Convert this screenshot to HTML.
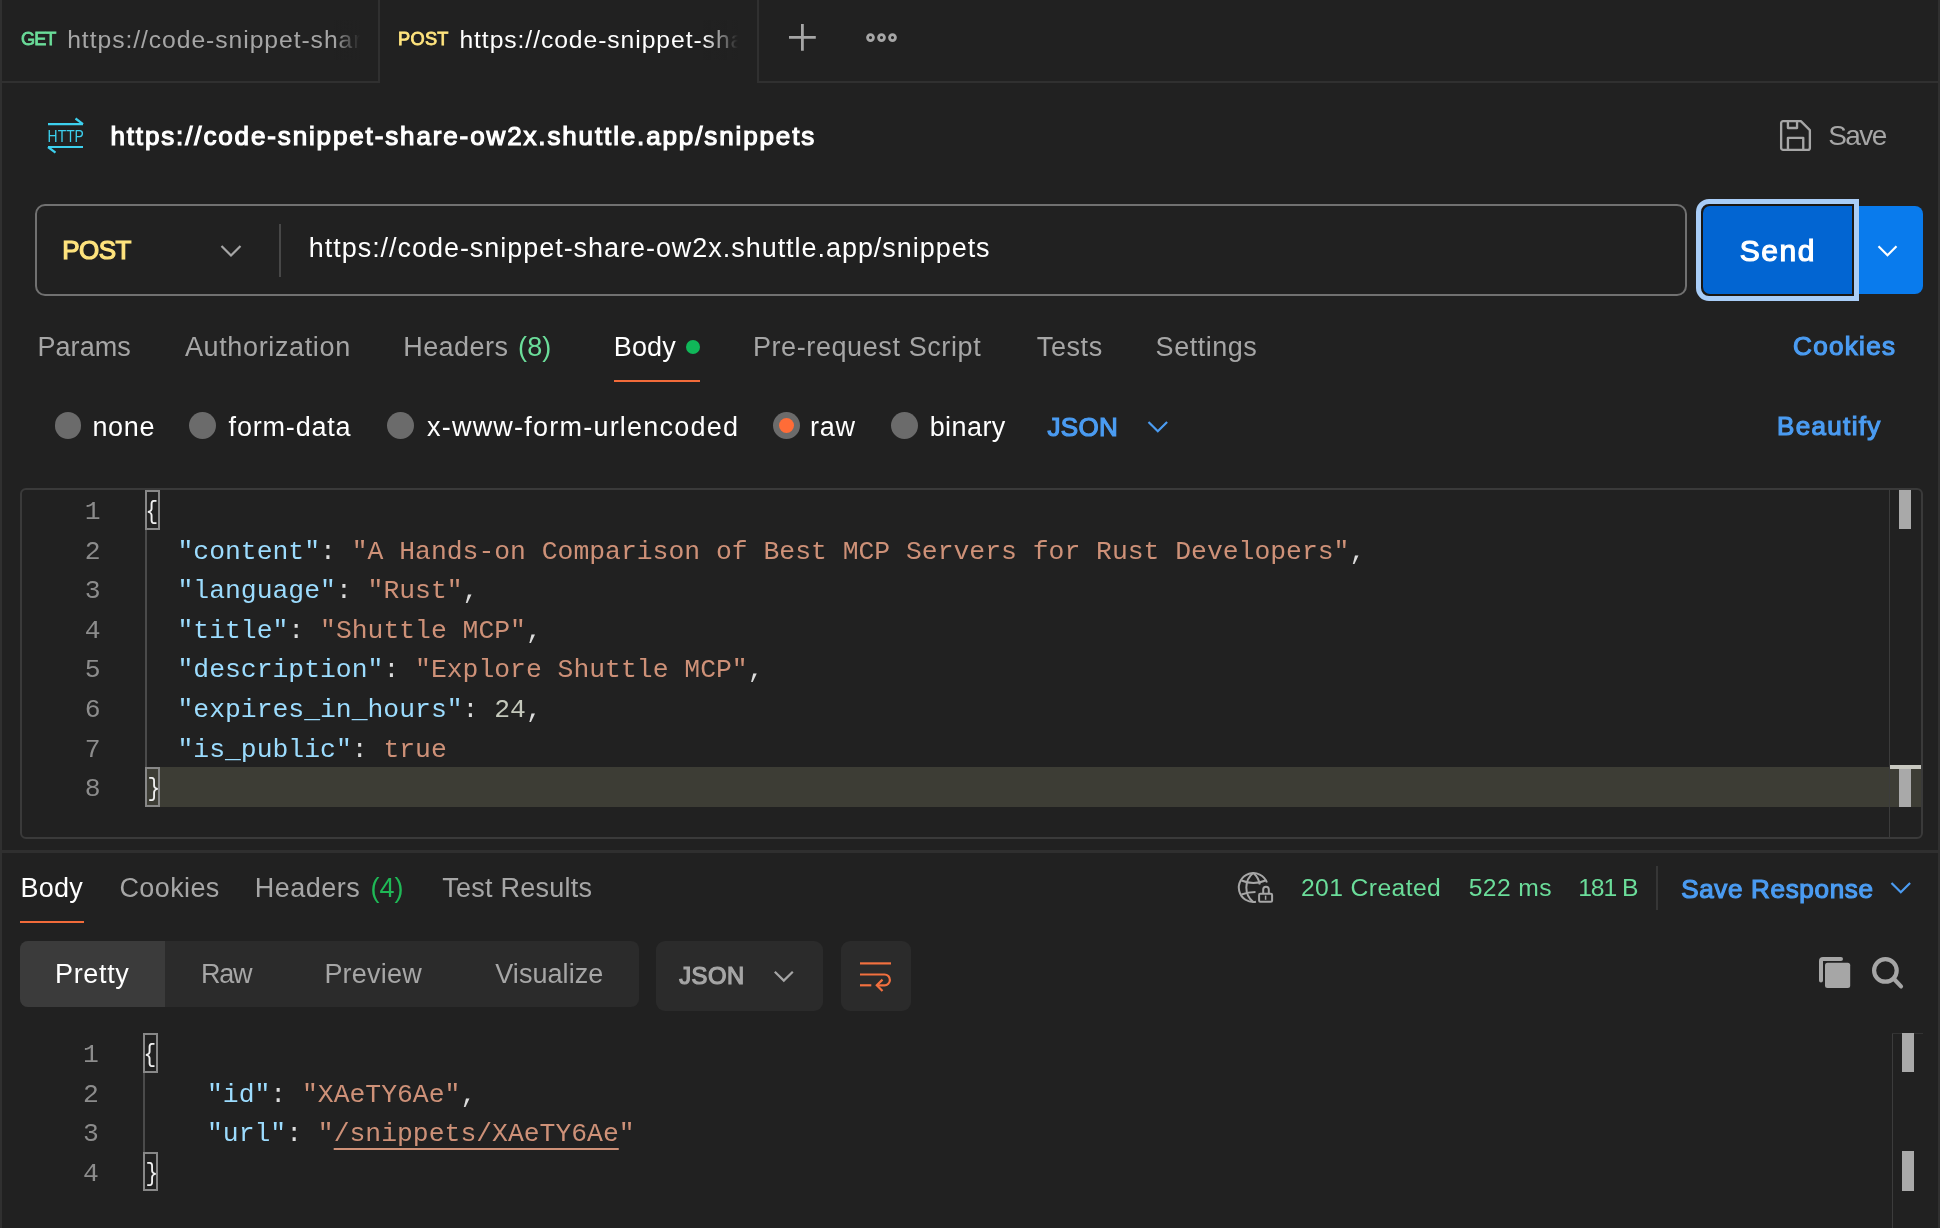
<!DOCTYPE html>
<html lang="en">
<head>
<meta charset="utf-8">
<title>Postman - POST snippets</title>
<style>
html,body{margin:0;padding:0}
body{width:1940px;height:1228px;overflow:hidden;background:#212121;position:relative;font-family:"Liberation Sans",sans-serif;color:#fff}
.a{position:absolute}
.t{position:absolute;line-height:1;white-space:pre;font-family:"Liberation Sans",sans-serif}
.ln{background:#303030}
svg{position:absolute;overflow:visible}
.code{position:absolute;font-family:"Liberation Mono",monospace;font-size:26.4px;line-height:39.6px;white-space:pre;color:#dcdcdc}
.code div{height:39.6px}
.br{color:#f0f0f0;display:inline-block;position:relative;left:-1.5px;transform:scaleX(.8);transform-origin:45% 50%}.k{color:#9cdcfe}.s{color:#ce9178}.n{color:#c4c8bb}.p{color:#9cdcfe}
.num{position:absolute;font-family:"Liberation Mono",monospace;font-size:26.4px;line-height:39.6px;color:#8c8c8c;text-align:right;width:60px}
.num div{height:39.6px}
.radio{position:absolute;width:26.8px;height:26.8px;border-radius:50%;background:#6b6b6b}
.bx{position:absolute;border:2px solid #888;box-sizing:border-box}
.mk{position:absolute;background:#a9a9a9}
</style>
</head>
<body>
<div id="app" style="position:absolute;left:0;top:0;width:1940px;height:1228px;will-change:transform">
<!-- frame strips -->
<div class="a ln" style="left:0;top:0;width:2px;height:1228px"></div>
<div class="a ln" style="left:1938px;top:0;width:2px;height:1228px"></div>
<!-- tab bar -->
<div class="a ln" style="left:0;top:81px;width:380px;height:2px"></div>
<div class="a ln" style="left:757px;top:81px;width:1183px;height:2px"></div>
<div class="a ln" style="left:378px;top:0;width:2px;height:83px"></div>
<div class="a ln" style="left:757px;top:0;width:2px;height:83px"></div>
<!-- plus and more icons -->
<svg style="left:789.2px;top:24.2px" width="27" height="27" viewBox="0 0 27 27"><path d="M13.4 0V26.8M0 13.4H26.8" stroke="#a6a6a6" stroke-width="2.8" fill="none"/></svg>
<svg style="left:864px;top:31px" width="36" height="14" viewBox="864 31 36 14"><g fill="none" stroke="#a6a6a6" stroke-width="2.8"><circle cx="870.5" cy="37.6" r="2.95"/><circle cx="881.5" cy="37.6" r="2.95"/><circle cx="892.5" cy="37.6" r="2.95"/></g></svg>
<!-- HTTP icon -->
<svg style="left:46px;top:116px" width="40" height="40" viewBox="0 0 40 40">
 <g fill="none" stroke="#3dd0ee" stroke-width="2.2">
  <path d="M2 8.2H37M29.5 2.5L37 8.2"/>
  <path d="M37 31H2M9.5 36.7L2 31"/>
 </g>
 <text x="1.6" y="26" font-family="Liberation Sans, sans-serif" font-size="17" fill="#3dd0ee" textLength="36.3" lengthAdjust="spacingAndGlyphs" transform="">HTTP</text>
</svg>
<!-- save icon -->
<svg style="left:1779px;top:119px" width="33" height="33" viewBox="0 0 34 34"><g fill="none" stroke="#a6a6a6" stroke-width="2.4" stroke-linejoin="round"><path d="M2.2 4.2a2 2 0 0 1 2-2H22.5L31.8 11.5V29.8a2 2 0 0 1-2 2H4.2a2 2 0 0 1-2-2Z"/><path d="M9.2 2.4V9.3H18.6V2.4"/><path d="M9.2 31.6V19.4H25V31.6"/></g></svg>
<!-- URL box -->
<div class="a" style="left:35px;top:204px;width:1652px;height:92px;box-sizing:border-box;border:2px solid #717171;border-radius:10px"></div>
<div class="a" style="left:279px;top:224px;width:2px;height:53px;background:#474747"></div>
<svg style="left:220px;top:244px" width="22" height="14" viewBox="0 0 22 14"><path d="M1.5 2L11 11.5L20.5 2" fill="none" stroke="#a6a6a6" stroke-width="2.2"/></svg>
<!-- Send button -->
<div class="a" style="left:1695.8px;top:199px;width:163.4px;height:102px;box-sizing:border-box;border:5.2px solid #a9cdf7;border-radius:13px 0 0 13px;background:#1b1712"></div>
<div class="a" style="left:1703px;top:206.2px;width:149px;height:88px;background:#0265d2;border-radius:7px 0 0 7px"></div>
<div class="a" style="left:1859px;top:206px;width:64px;height:88px;background:#097bed;border-radius:0 8px 8px 0"></div>
<svg style="left:1877px;top:244px" width="22" height="14" viewBox="0 0 22 14"><path d="M1.5 2.2L10.5 11.2L19.5 2.2" fill="none" stroke="#fff" stroke-width="2.2"/></svg>
<!-- request tabs -->
<div class="a" style="left:685.9px;top:340px;width:14.2px;height:14.2px;border-radius:50%;background:#10b759"></div>
<div class="a" style="left:614px;top:379.6px;width:86px;height:2.5px;background:#f26b3a"></div>
<!-- radios -->
<div class="radio" style="left:54.6px;top:411.8px"></div>
<div class="radio" style="left:189.2px;top:411.8px"></div>
<div class="radio" style="left:387.1px;top:411.8px"></div>
<div class="radio" style="left:773.2px;top:411.8px"></div>
<div class="a" style="left:779px;top:417.8px;width:15.2px;height:15.2px;border-radius:50%;background:#ff6c37"></div>
<div class="radio" style="left:891.1px;top:411.8px"></div>
<svg style="left:1147px;top:420px" width="22" height="14" viewBox="0 0 22 14"><path d="M1.5 2L10.8 11.3L20.1 2" fill="none" stroke="#4b9cf2" stroke-width="2.2"/></svg>
<!-- request editor -->
<div class="a" style="left:20px;top:488px;width:1903px;height:351px;box-sizing:border-box;border:2px solid #3a3a3a;border-radius:6px"></div>
<div class="a" style="left:146px;top:767px;width:1775px;height:40px;background:#3d3d35"></div>
<div class="a" style="left:1889px;top:490px;width:1px;height:347px;background:#3c3c3c"></div>
<div class="mk" style="left:1899px;top:490px;width:12px;height:39px"></div>
<div class="a" style="left:1890px;top:765px;width:31px;height:4px;background:#c8c8c0"></div>
<div class="mk" style="left:1899px;top:769px;width:12px;height:38px"></div>
<div class="a" style="left:145.2px;top:530px;width:2px;height:237px;background:#4b4b4b"></div>
<div class="bx" style="left:145.4px;top:490.2px;width:14.6px;height:39.6px"></div>
<div class="bx" style="left:145.4px;top:767px;width:14.6px;height:39.8px"></div>
<div class="num" style="left:40.7px;top:493px"><div>1</div><div>2</div><div>3</div><div>4</div><div>5</div><div>6</div><div>7</div><div>8</div></div>
<div class="code" style="left:145.8px;top:493px"><div><span class="br">{</span></div><div>  <span class="p">"</span><span class="k">content</span><span class="p">"</span>: <span class="s">"A Hands-on Comparison of Best MCP Servers for Rust Developers"</span>,</div><div>  <span class="p">"</span><span class="k">language</span><span class="p">"</span>: <span class="s">"Rust"</span>,</div><div>  <span class="p">"</span><span class="k">title</span><span class="p">"</span>: <span class="s">"Shuttle MCP"</span>,</div><div>  <span class="p">"</span><span class="k">description</span><span class="p">"</span>: <span class="s">"Explore Shuttle MCP"</span>,</div><div>  <span class="p">"</span><span class="k">expires_in_hours</span><span class="p">"</span>: <span class="n">24</span>,</div><div>  <span class="p">"</span><span class="k">is_public</span><span class="p">"</span>: <span class="s">true</span></div><div><span class="br" style="left:0.3px">}</span></div></div>
<!-- separator -->
<div class="a" style="left:2px;top:850px;width:1936px;height:3px;background:#2f2f2f"></div>
<!-- response tabs -->
<div class="a" style="left:20px;top:920.7px;width:64px;height:2.3px;background:#f26b3a"></div>
<div class="a" style="left:1656px;top:866px;width:2px;height:44px;background:#363636"></div>
<svg style="left:1890px;top:881px" width="22" height="14" viewBox="0 0 22 14"><path d="M1.5 2L10.8 11.3L20.1 2" fill="none" stroke="#4b9cf2" stroke-width="2.2"/></svg>
<!-- globe + lock -->
<svg style="left:1230px;top:865px" width="50" height="45" viewBox="1230 865 50 45"><g fill="none" stroke="#a6a6a6" stroke-width="2"><path d="M1256 901.8A14.5 14.5 0 1 1 1266.9 882.5"/><path d="M1253.3 873C1244 880 1244 895 1253.3 902"/><path d="M1253.3 873C1257 876 1259 880 1259.8 884.5"/><path d="M1241.5 880.5Q1253.5 885.5 1265.5 880.5"/><path d="M1241.5 894.5Q1248 892 1255.5 892"/><rect x="1259.1" y="893.7" width="13" height="8.1" rx="1.2"/><path d="M1263.2 893V889.5a2.8 2.8 0 0 1 5.6 0V893"/><path d="M1265.6 895.6V899.8" stroke-width="1.5"/></g></svg>
<!-- response toolbar -->
<div class="a" style="left:20px;top:941px;width:619px;height:66px;background:#2b2b2b;border-radius:8px"></div>
<div class="a" style="left:20px;top:941px;width:145px;height:66px;background:#3b3b3b;border-radius:8px 0 0 8px"></div>
<div class="a" style="left:656px;top:941px;width:167px;height:70px;background:#2b2b2b;border-radius:9px"></div>
<svg style="left:773px;top:970px" width="22" height="14" viewBox="0 0 22 14"><path d="M1.8 1.8L10.8 10.6L19.8 1.8" fill="none" stroke="#a6a6a6" stroke-width="2.2"/></svg>
<div class="a" style="left:841px;top:941px;width:70px;height:70px;background:#2b2b2b;border-radius:9px"></div>
<svg style="left:858px;top:958px" width="36" height="36" viewBox="0 0 36 36"><g fill="none" stroke="#f2703f" stroke-width="2.2"><path d="M2 5.4H33"/><path d="M2 16.5H26.5a5.4 5.4 0 0 1 0 10.8H19"/><path d="M2 27.3H13.3"/><path d="M24.5 21.6L18.8 27.3L24.5 33"/></g></svg>
<!-- copy + search -->
<svg style="left:1816px;top:954px" width="38" height="38" viewBox="0 0 38 38"><path d="M5 26.5V7a2 2 0 0 1 2-2H25" fill="none" stroke="#a6a6a6" stroke-width="4" stroke-linecap="round"/><rect x="9" y="8.8" width="25.2" height="25.2" rx="2.5" fill="#a6a6a6"/></svg>
<svg style="left:1870px;top:955px" width="36" height="36" viewBox="0 0 36 36"><g fill="none" stroke="#a6a6a6" stroke-width="4.2" stroke-linecap="round"><circle cx="15.4" cy="15.4" r="11.3"/><path d="M23.8 23.8L31 31.4"/></g></svg>
<!-- response editor -->
<div class="a" style="left:1892px;top:1033px;width:1px;height:195px;background:#3c3c3c"></div>
<div class="a" style="left:1892px;top:1033px;width:31px;height:1px;background:#333"></div>
<div class="mk" style="left:1902px;top:1033px;width:12px;height:39px"></div>
<div class="mk" style="left:1902px;top:1151px;width:12px;height:40px"></div>
<div class="a" style="left:143.2px;top:1073px;width:2px;height:80px;background:#4b4b4b"></div>
<div class="bx" style="left:143.3px;top:1033.4px;width:14.8px;height:39.6px"></div>
<div class="bx" style="left:143.3px;top:1152px;width:14.8px;height:39px"></div>
<div class="num" style="left:38.8px;top:1036px"><div>1</div><div>2</div><div>3</div><div>4</div></div>
<div class="code" style="left:143.6px;top:1036px"><div><span class="br">{</span></div><div>    <span class="p">"</span><span class="k">id</span><span class="p">"</span>: <span class="s">"XAeTY6Ae"</span>,</div><div>    <span class="p">"</span><span class="k">url</span><span class="p">"</span>: <span class="s">"<span style="text-decoration:underline;text-underline-offset:6.5px;text-decoration-thickness:1.7px">/snippets/XAeTY6Ae</span>"</span></div><div><span class="br" style="left:0.3px">}</span></div></div>
<span class="t" id="get" style="left:20.9px;top:30.1px;font-size:18.2px;font-weight:400;letter-spacing:-0.90px;color:#6bdd9a;-webkit-text-stroke:0.8px #6bdd9a">GET</span>
<span class="t" id="tab1" style="left:67.2px;top:27.9px;font-size:24.7px;font-weight:400;letter-spacing:0.94px;color:#a6a6a6">https://code-snippet-shar</span>
<span class="t" id="post" style="left:398.1px;top:30.1px;font-size:18.2px;font-weight:400;letter-spacing:0.27px;color:#ffe47e;-webkit-text-stroke:0.8px #ffe47e">POST</span>
<span class="t" id="tab2" style="left:459.4px;top:27.9px;font-size:24.7px;font-weight:400;letter-spacing:0.93px;color:#ffffff">https://code-snippet-sha</span>
<span class="t" id="title" style="left:110.4px;top:123.0px;font-size:26px;font-weight:400;letter-spacing:1.87px;color:#ffffff;-webkit-text-stroke:1.2px #ffffff">https://code-snippet-share-ow2x.shuttle.app/snippets</span>
<span class="t" id="save" style="left:1828.2px;top:122.3px;font-size:28px;font-weight:400;letter-spacing:-1.60px;color:#a6a6a6">Save</span>
<span class="t" id="post2" style="left:62.2px;top:237.4px;font-size:26px;font-weight:400;letter-spacing:-0.50px;color:#ffe47e;-webkit-text-stroke:1.2px #ffe47e">POST</span>
<span class="t" id="url" style="left:308.8px;top:235.0px;font-size:27px;font-weight:400;letter-spacing:0.96px;color:#ffffff">https://code-snippet-share-ow2x.shuttle.app/snippets</span>
<span class="t" id="send" style="left:1739.7px;top:236.3px;font-size:30px;font-weight:400;letter-spacing:1.60px;color:#ffffff;-webkit-text-stroke:1.2px #ffffff">Send</span>
<span class="t" id="params" style="left:37.5px;top:334.2px;font-size:27px;font-weight:400;letter-spacing:0.04px;color:#a6a6a6">Params</span>
<span class="t" id="auth" style="left:184.9px;top:334.2px;font-size:27px;font-weight:400;letter-spacing:0.64px;color:#a6a6a6">Authorization</span>
<span class="t" id="headers" style="left:403.2px;top:334.2px;font-size:27px;font-weight:400;letter-spacing:0.45px;color:#a6a6a6">Headers</span>
<span class="t" id="h8" style="left:518.1px;top:334.2px;font-size:27px;font-weight:400;letter-spacing:0.05px;color:#6bdd9a">(8)</span>
<span class="t" id="body" style="left:613.8px;top:334.2px;font-size:27px;font-weight:400;letter-spacing:0.13px;color:#ffffff">Body</span>
<span class="t" id="prereq" style="left:752.9px;top:334.2px;font-size:27px;font-weight:400;letter-spacing:0.60px;color:#a6a6a6">Pre-request Script</span>
<span class="t" id="tests" style="left:1036.8px;top:334.2px;font-size:27px;font-weight:400;letter-spacing:0.60px;color:#a6a6a6">Tests</span>
<span class="t" id="settings" style="left:1155.6px;top:334.2px;font-size:27px;font-weight:400;letter-spacing:0.53px;color:#a6a6a6">Settings</span>
<span class="t" id="cookies" style="left:1793.1px;top:333.3px;font-size:26px;font-weight:400;letter-spacing:1.32px;color:#4b9cf2;-webkit-text-stroke:1.2px #4b9cf2">Cookies</span>
<span class="t" id="none" style="left:92.4px;top:414.4px;font-size:27px;font-weight:400;letter-spacing:0.67px;color:#ffffff">none</span>
<span class="t" id="formdata" style="left:228.6px;top:414.4px;font-size:27px;font-weight:400;letter-spacing:0.81px;color:#ffffff">form-data</span>
<span class="t" id="xwww" style="left:427.0px;top:414.4px;font-size:27px;font-weight:400;letter-spacing:1.22px;color:#ffffff">x-www-form-urlencoded</span>
<span class="t" id="raw" style="left:810.1px;top:414.4px;font-size:27px;font-weight:400;letter-spacing:0.65px;color:#ffffff">raw</span>
<span class="t" id="binary" style="left:929.7px;top:414.4px;font-size:27px;font-weight:400;letter-spacing:0.42px;color:#ffffff">binary</span>
<span class="t" id="json1" style="left:1047.6px;top:413.5px;font-size:26px;font-weight:400;letter-spacing:0.27px;color:#4b9cf2;-webkit-text-stroke:1.2px #4b9cf2">JSON</span>
<span class="t" id="beautify" style="left:1777.0px;top:413.3px;font-size:26px;font-weight:400;letter-spacing:1.34px;color:#4b9cf2;-webkit-text-stroke:1.2px #4b9cf2">Beautify</span>
<span class="t" id="rbody" style="left:20.4px;top:874.8px;font-size:27px;font-weight:400;letter-spacing:0.27px;color:#ffffff">Body</span>
<span class="t" id="rcookies" style="left:119.5px;top:874.8px;font-size:27px;font-weight:400;letter-spacing:0.37px;color:#a6a6a6">Cookies</span>
<span class="t" id="rheaders" style="left:254.8px;top:874.8px;font-size:27px;font-weight:400;letter-spacing:0.47px;color:#a6a6a6">Headers</span>
<span class="t" id="h4" style="left:370.4px;top:874.8px;font-size:27px;font-weight:400;letter-spacing:0.10px;color:#1fb856">(4)</span>
<span class="t" id="testres" style="left:442.3px;top:874.8px;font-size:27px;font-weight:400;letter-spacing:0.24px;color:#a6a6a6">Test Results</span>
<span class="t" id="st201" style="left:1300.9px;top:875.9px;font-size:24.7px;font-weight:400;letter-spacing:0.40px;color:#6bdd9a">201 Created</span>
<span class="t" id="st522" style="left:1468.7px;top:875.9px;font-size:24.7px;font-weight:400;letter-spacing:0.40px;color:#6bdd9a">522 ms</span>
<span class="t" id="st181" style="left:1578.2px;top:875.9px;font-size:24.7px;font-weight:400;letter-spacing:-1.07px;color:#6bdd9a">181 B</span>
<span class="t" id="saveresp" style="left:1681.2px;top:876.4px;font-size:26px;font-weight:400;letter-spacing:0.68px;color:#4b9cf2;-webkit-text-stroke:1.2px #4b9cf2">Save Response</span>
<span class="t" id="pretty" style="left:55.0px;top:960.9px;font-size:27px;font-weight:400;letter-spacing:0.66px;color:#ffffff">Pretty</span>
<span class="t" id="rawr" style="left:201.1px;top:960.9px;font-size:27px;font-weight:400;letter-spacing:-1.25px;color:#a6a6a6">Raw</span>
<span class="t" id="preview" style="left:324.4px;top:960.9px;font-size:27px;font-weight:400;letter-spacing:0.22px;color:#a6a6a6">Preview</span>
<span class="t" id="visualize" style="left:495.3px;top:960.9px;font-size:27px;font-weight:400;letter-spacing:0.05px;color:#a6a6a6">Visualize</span>
<span class="t" id="json2" style="left:679.2px;top:964.1px;font-size:23.8px;font-weight:400;letter-spacing:0.53px;color:#a6a6a6;-webkit-text-stroke:1.2px #a6a6a6">JSON</span>
<!-- tab text fades -->
<div class="a" style="left:334px;top:20px;width:26px;height:40px;background:linear-gradient(to right,rgba(33,33,33,0),#212121)"></div>
<div class="a" style="left:360px;top:20px;width:18px;height:40px;background:#212121"></div>
<div class="a" style="left:703px;top:20px;width:35px;height:40px;background:linear-gradient(to right,rgba(33,33,33,0),#212121)"></div>
<div class="a" style="left:738px;top:20px;width:18px;height:40px;background:#212121"></div>
</div>
</body>
</html>
